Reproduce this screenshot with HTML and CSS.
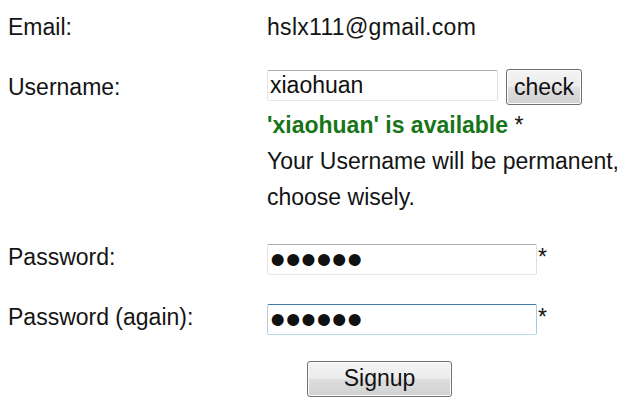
FILE: index.html
```html
<!DOCTYPE html>
<html lang="en">
<head>
<meta charset="utf-8">
<title>Signup</title>
<link rel="stylesheet" href="styles.css">
</head>
<body>
<form class="signup">
  <div class="row">
    <div class="label">Email:</div>
    <div class="value email">hslx111@gmail.com</div>
  </div>
  <div class="row row-user">
    <div class="label">Username:</div>
    <div class="value col">
      <div class="controls">
        <input class="field field-user" type="text" value="xiaohuan">
        <button type="button" class="btn btn-check">check</button>
      </div>
      <div class="line"><span class="ok">'xiaohuan' is available</span> *</div>
      <div class="line">Your Username will be permanent,</div>
      <div class="line">choose wisely.</div>
    </div>
  </div>
  <div class="row">
    <div class="label">Password:</div>
    <div class="value controls-pw">
      <input class="field field-pw" type="password" value="secret">
      <span class="req">*</span>
    </div>
  </div>
  <div class="row">
    <div class="label">Password (again):</div>
    <div class="value controls-pw">
      <input class="field field-pw focus" type="password" value="secret">
      <span class="req">*</span>
    </div>
  </div>
  <div class="row row-submit">
    <div class="label"></div>
    <div class="value">
      <button type="submit" class="btn btn-signup">Signup</button>
    </div>
  </div>
</form>
</body>
</html>
```

FILE: styles.css
```css
html, body {
  margin: 0;
  padding: 0;
  background: #ffffff;
}
body {
  font-family: "Liberation Sans", Arial, sans-serif;
  font-size: 23px;
  line-height: 36px;
  color: #141414;
}
.signup {
  display: flex;
  flex-direction: column;
  gap: 24px;
  padding: 9px 0 0 8px;
}
.row {
  display: flex;
  align-items: center;
}
.row-user {
  align-items: flex-start;
}
.label {
  width: 259px;
  flex: none;
  height: 36px;
}
.value {
  flex: none;
}
.email {
  letter-spacing: 0.3px;
}
.col {
  display: flex;
  flex-direction: column;
}
.controls {
  display: flex;
  align-items: flex-start;
  height: 38px;
  gap: 8px;
}
.field {
  box-sizing: border-box;
  height: 31px;
  margin: 0;
  padding: 0 2px;
  font-family: "Liberation Sans", Arial, sans-serif;
  font-size: 23px;
  color: #111;
  background: #fff;
  border: 1px solid;
  border-color: #abadb3 #dbdfe6 #e3e9ef #e2e3ea;
  border-radius: 2px;
  outline: none;
}
.field-user {
  width: 231px;
  margin-top: 1px;
}
.controls-pw {
  display: flex;
  align-items: flex-start;
  height: 36px;
  padding-top: 5px;
  box-sizing: border-box;
}
.field-pw {
  width: 270px;
  font-size: 44px;
  letter-spacing: 0;
  line-height: 29px;
  padding: 0 3px 0 2px;
}
.field-pw.focus {
  border-color: #3d7bad #a4c9e3 #b7d9ed #b5cfe7;
}
.req {
  font-size: 23px;
  line-height: 26px;
  margin-left: 1px;
}
.ok {
  color: #177517;
  font-weight: bold;
}
.btn {
  box-sizing: border-box;
  height: 36px;
  margin: 0;
  font-family: "Liberation Sans", Arial, sans-serif;
  font-size: 23px;
  color: #111;
  border: 1px solid #707070;
  border-radius: 3px;
  background: linear-gradient(#f4f4f4 0%, #ececec 48%, #dddddd 52%, #d2d2d2 100%);
  box-shadow: inset 0 0 0 1px #fcfcfc;
  padding: 0;
}
.btn-check {
  width: 76px;
}
.row-submit {
  margin-top: 1px;
}
.btn-signup {
  width: 145px;
  margin-left: 40px;
}
```
